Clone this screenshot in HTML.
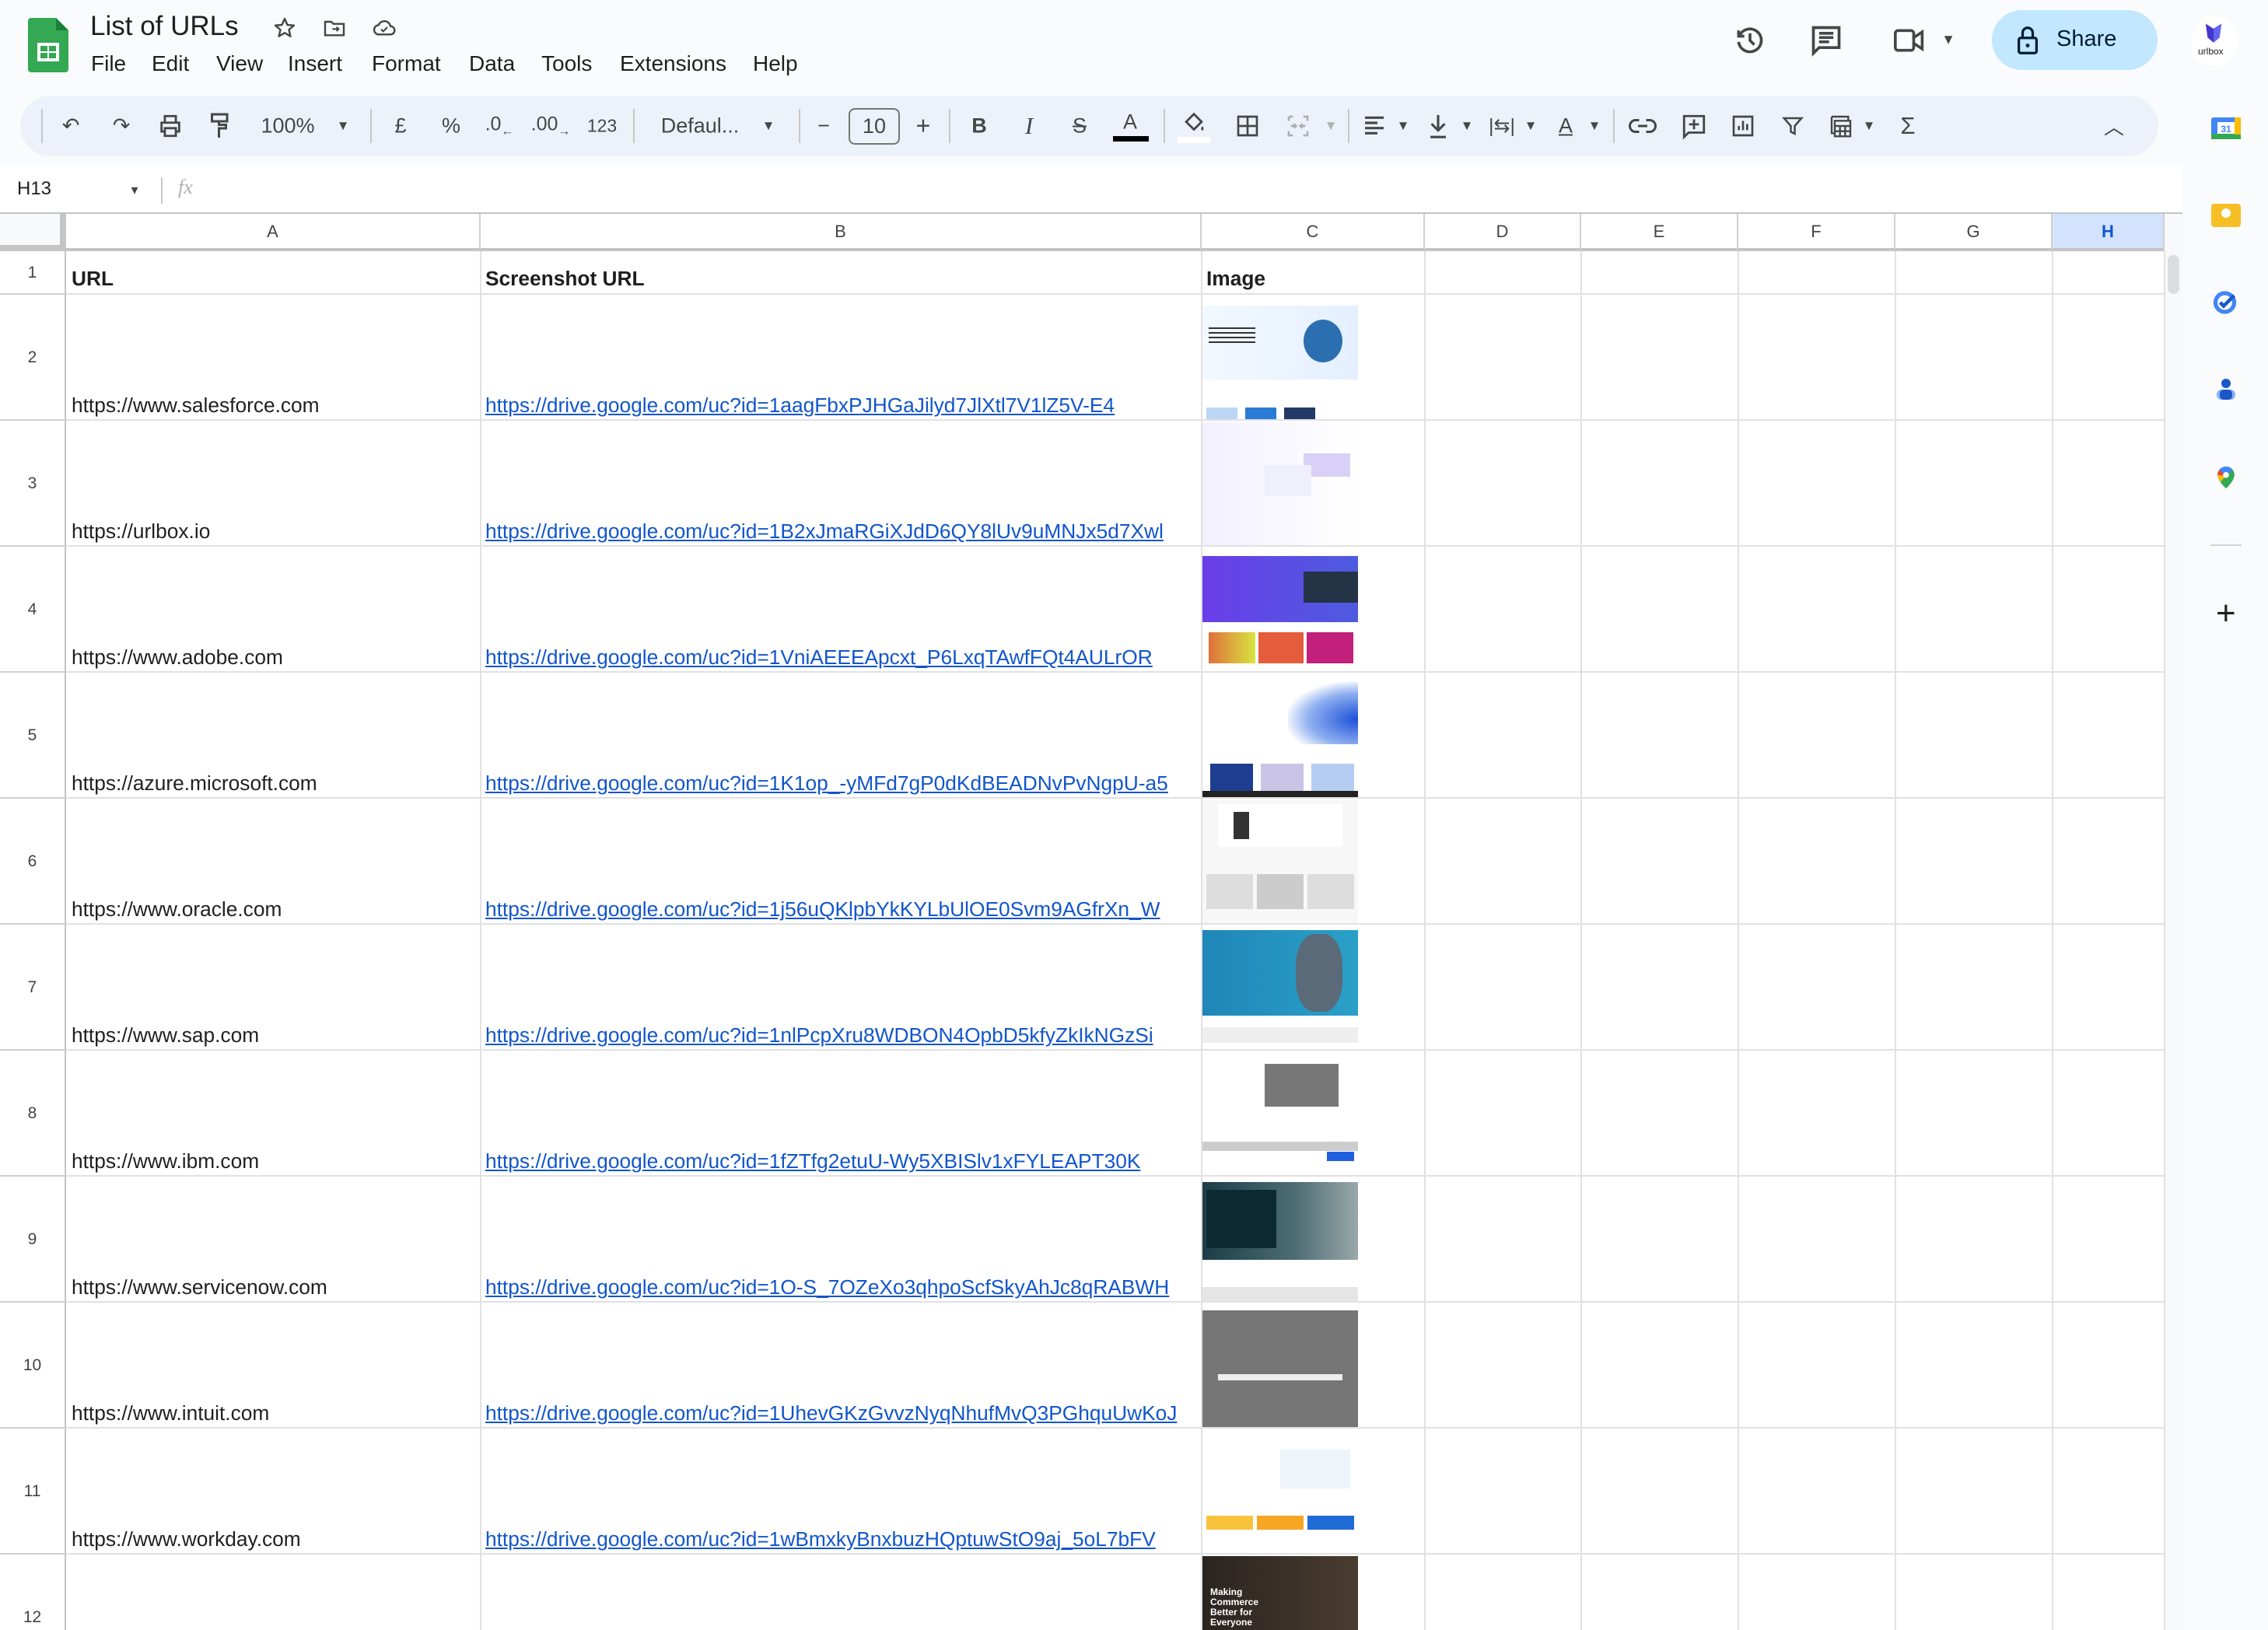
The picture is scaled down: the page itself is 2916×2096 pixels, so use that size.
<!DOCTYPE html>
<html style="overflow:hidden;height:2096px"><head><meta charset="utf-8"><style>
*{box-sizing:border-box;margin:0;padding:0}
body{width:2916px;height:2096px;overflow:hidden;background:#f9fbfd;font-family:"Liberation Sans",Arial,sans-serif;position:relative;color:#1f1f1f}
.a{position:absolute}
.menu span{position:absolute;top:66px;font-size:28px;color:#1f1f1f}
.tb{position:absolute;left:26px;top:123px;width:2749px;height:78px;background:#edf2fa;border-radius:39px}
.ti{position:absolute;top:162px;transform:translate(-50%,-50%);color:#444746;font-size:27px;white-space:nowrap}
.sep{position:absolute;top:140px;width:2px;height:44px;background:#c7c7c7}
.ch{position:absolute;top:275px;height:48px;border-right:2px solid #d0d0d0;border-bottom:4px solid #c4c4c4;background:#fff;text-align:center;font-size:22px;line-height:46px;color:#444}
.rh{position:absolute;left:0;width:85px;border-bottom:2px solid #d0d0d0;border-right:2px solid #c4c4c4;background:#fff;font-size:21px;color:#444;text-align:center}
.vl{position:absolute;top:323px;width:2px;height:1773px;background:#e1e1e1}
.hl{position:absolute;left:85px;width:2698px;height:2px;background:#e1e1e1}
.c{position:absolute;font-size:26.3px;white-space:nowrap}
.lk{color:#1155cc;text-decoration:underline}
.th{position:absolute;left:1546px;width:200px;height:158px;overflow:hidden;background:#fff}
svg{display:block}
</style></head><body>

<svg class="a" style="left:36px;top:23px" width="52" height="70" viewBox="0 0 52 70"><path d="M4 0h32l16 16v50a4 4 0 0 1-4 4H4a4 4 0 0 1-4-4V4a4 4 0 0 1 4-4z" fill="#34a853"/><path d="M36 0v16h16z" fill="#188038"/><rect x="12" y="32" width="28" height="24" fill="#fff"/><rect x="16" y="36" width="9" height="7" fill="#34a853"/><rect x="27" y="36" width="9" height="7" fill="#34a853"/><rect x="16" y="45" width="9" height="7" fill="#34a853"/><rect x="27" y="45" width="9" height="7" fill="#34a853"/></svg>
<div class="a" style="left:116px;top:14px;font-size:35px;color:#1f1f1f">List of URLs</div>
<svg class="a" style="left:350px;top:20px" width="32" height="32" viewBox="0 0 24 24"><path d="M12 3l2.6 6 6.4.5-4.9 4.2 1.5 6.3L12 16.7 6.4 20l1.5-6.3L3 9.5 9.4 9z" fill="none" stroke="#444746" stroke-width="1.8" stroke-linejoin="round"/></svg>
<svg class="a" style="left:414px;top:20px" width="32" height="32" viewBox="0 0 24 24"><path d="M3 6h6l2 2h10v11H3z" fill="none" stroke="#444746" stroke-width="1.8"/><path d="M10 13h6m-2-2l2 2-2 2" fill="none" stroke="#444746" stroke-width="1.6"/></svg>
<svg class="a" style="left:477px;top:19px" width="34" height="32" viewBox="0 0 24 24"><path d="M7 19h11a4 4 0 0 0 0-8 6 6 0 0 0-11.5-1A4.5 4.5 0 0 0 7 19z" fill="none" stroke="#444746" stroke-width="1.8"/><path d="M9 14l2 2 4-4" fill="none" stroke="#444746" stroke-width="1.6"/></svg>
<div class="menu"><span style="left:117px">File</span><span style="left:195px">Edit</span><span style="left:278px">View</span><span style="left:370px">Insert</span><span style="left:478px">Format</span><span style="left:603px">Data</span><span style="left:696px">Tools</span><span style="left:797px">Extensions</span><span style="left:968px">Help</span></div>

<svg class="a" style="left:2228px;top:30px" width="44" height="44" viewBox="0 0 24 24"><path d="M4 5v4h4" fill="none" stroke="#444746" stroke-width="2"/><path d="M4.5 9A8 8 0 1 1 4 13" fill="none" stroke="#444746" stroke-width="2"/><path d="M12 7v5l3 3" fill="none" stroke="#444746" stroke-width="2"/></svg>
<svg class="a" style="left:2326px;top:30px" width="44" height="44" viewBox="0 0 24 24"><path d="M3 3h18v14H7l-4 4z" fill="none" stroke="#444746" stroke-width="2"/><path d="M7 7h10M7 10h10M7 13h7" stroke="#444746" stroke-width="2"/></svg>
<svg class="a" style="left:2433px;top:32px" width="44" height="40" viewBox="0 0 24 22"><rect x="2" y="4" width="13" height="14" rx="2" fill="none" stroke="#444746" stroke-width="2"/><path d="M15 9l6-4v12l-6-4" fill="none" stroke="#444746" stroke-width="2"/></svg>
<div class="ti" style="left:2505px;top:51px;font-size:18px">▼</div>
<div class="a" style="left:2561px;top:13px;width:213px;height:77px;border-radius:39px;background:#c2e7ff"></div>
<svg class="a" style="left:2594px;top:34px" width="26" height="36" viewBox="0 0 16 22"><rect x="1" y="9" width="14" height="12" rx="1.5" fill="none" stroke="#001d35" stroke-width="2"/><path d="M4 9V5a4 4 0 0 1 8 0v4" fill="none" stroke="#001d35" stroke-width="2"/><circle cx="8" cy="15" r="1.5" fill="#001d35"/></svg>
<div class="a" style="left:2644px;top:34px;font-size:29px;color:#001d35">Share</div>
<div class="a" style="left:2818px;top:20px;width:58px;height:65px;border-radius:29px;background:#fff"></div>
<svg class="a" style="left:2833px;top:28px" width="26" height="28" viewBox="0 0 20 22"><path d="M2 2l8 5 8-5-2 14-6 5-6-5z" fill="#4338ca"/><path d="M10 7l8-5-2 14-6 5z" fill="#6366f1"/></svg>
<div class="a" style="left:2826px;top:59px;font-size:12px;color:#222">urlbox</div>

<div class="tb"></div>
<div class="sep" style="left:53px"></div><div class="sep" style="left:476px"></div><div class="sep" style="left:814px"></div><div class="sep" style="left:1027px"></div><div class="sep" style="left:1220px"></div><div class="sep" style="left:1496px"></div><div class="sep" style="left:1733px"></div><div class="sep" style="left:2074px"></div>
<div class="ti" style="left:91px">↶</div><div class="ti" style="left:156px">↷</div>
<svg class="ti" style="left:219px" width="34" height="34" viewBox="0 0 24 24"><path d="M7 8V3h10v5M7 17H4V9h16v8h-3M7 14h10v7H7z" fill="none" stroke="#444746" stroke-width="2"/></svg>
<svg class="ti" style="left:283px" width="30" height="36" viewBox="0 0 20 24"><path d="M3 2h13v6H3zM9 8v3h6v3H9v8" fill="none" stroke="#444746" stroke-width="2"/></svg>
<div class="ti" style="left:370px">100%</div><div class="ti" style="left:441px;font-size:17px">▼</div>
<div class="ti" style="left:515px">£</div><div class="ti" style="left:580px">%</div><div class="ti" style="left:642px;font-size:25px">.0<sub style="font-size:16px">←</sub></div><div class="ti" style="left:708px;font-size:25px">.00<sub style="font-size:16px">→</sub></div><div class="ti" style="left:774px;font-size:23px">123</div>
<div class="ti" style="left:900px">Defaul...</div><div class="ti" style="left:988px;font-size:17px">▼</div>
<div class="ti" style="left:1059px">−</div>
<div class="a" style="left:1091px;top:139px;width:66px;height:47px;border:2px solid #747775;border-radius:8px;text-align:center;font-size:27px;line-height:43px;color:#444746">10</div>
<div class="ti" style="left:1187px;font-size:32px">+</div>
<div class="ti" style="left:1259px;font-weight:bold">B</div><div class="ti" style="left:1323px;font-style:italic;font-family:'Liberation Serif',serif;font-size:31px">I</div><div class="ti" style="left:1388px;text-decoration:line-through">S</div>
<div class="ti" style="left:1453px;top:157px">A</div><div class="a" style="left:1431px;top:175px;width:46px;height:7px;background:#000"></div>
<svg class="ti" style="left:1535px;top:158px" width="34" height="34" viewBox="0 0 24 24"><path d="M5 11l7-7 7 7-7 7z" fill="none" stroke="#444746" stroke-width="2"/><path d="M20 15c1 2 1 3 0 4-1 0-2-1-1-3z" fill="#444746"/></svg>
<div class="a" style="left:1514px;top:176px;width:42px;height:8px;background:#fff"></div>
<svg class="ti" style="left:1604px" width="32" height="32" viewBox="0 0 24 24"><path d="M3 3h18v18H3zM12 3v18M3 12h18" fill="none" stroke="#444746" stroke-width="2"/></svg>
<svg class="ti" style="left:1669px" width="32" height="32" viewBox="0 0 24 24"><path d="M3 3h4M17 3h4v4M21 17v4h-4M7 21H3v-4M3 7V3M5 12h5m-2-2l2 2-2 2M19 12h-5m2-2l-2 2 2 2" fill="none" stroke="#b0b0b0" stroke-width="2"/></svg>
<div class="ti" style="left:1711px;font-size:17px;color:#b0b0b0">▼</div>
<svg class="ti" style="left:1767px" width="32" height="32" viewBox="0 0 24 24"><path d="M3 4h18M3 9h12M3 14h18M3 19h12" stroke="#444746" stroke-width="2.4"/></svg><div class="ti" style="left:1804px;font-size:17px">▼</div>
<svg class="ti" style="left:1849px" width="30" height="34" viewBox="0 0 20 24"><path d="M10 2v14M4 10l6 6 6-6M3 22h14" fill="none" stroke="#444746" stroke-width="2.2"/></svg><div class="ti" style="left:1886px;font-size:17px">▼</div>
<div class="ti" style="left:1931px;font-size:25px">|⇆|</div><div class="ti" style="left:1968px;font-size:17px">▼</div>
<div class="ti" style="left:2013px;text-decoration:underline">A</div><div class="ti" style="left:2050px;font-size:17px">▼</div>
<svg class="ti" style="left:2112px" width="36" height="24" viewBox="0 0 24 16"><path d="M9 3H6a5 5 0 0 0 0 10h3M15 3h3a5 5 0 0 1 0 10h-3M8 8h8" fill="none" stroke="#444746" stroke-width="2"/></svg>
<svg class="ti" style="left:2178px" width="34" height="36" viewBox="0 0 24 24"><path d="M3 3h18v15H7l-4 4zM12 6v9M7.5 10.5h9" fill="none" stroke="#444746" stroke-width="2"/></svg>
<svg class="ti" style="left:2241px" width="32" height="32" viewBox="0 0 24 24"><path d="M3 3h18v18H3zM8 16v-4M12 16V7M16 16v-6" fill="none" stroke="#444746" stroke-width="2"/></svg>
<svg class="ti" style="left:2305px" width="30" height="32" viewBox="0 0 24 24"><path d="M3 4h18l-7 8v8l-4-2v-6z" fill="none" stroke="#444746" stroke-width="2"/></svg>
<svg class="ti" style="left:2367px" width="32" height="34" viewBox="0 0 24 24"><path d="M3 3h16v4M3 3v16h4M6 7h15v15H6zM6 12h15M6 17h15M11 12v10M16 12v10" fill="none" stroke="#444746" stroke-width="1.8"/></svg><div class="ti" style="left:2403px;font-size:17px">▼</div>
<div class="ti" style="left:2453px;font-size:31px">Σ</div>
<div class="ti" style="left:2718px;font-size:26px">︿</div>

<div class="a" style="left:0;top:213px;width:2806px;height:62px;background:#fff"></div>
<div class="a" style="left:22px;top:229px;font-size:24px;color:#1f1f1f">H13</div>
<div class="ti" style="left:173px;top:245px;font-size:15px">▼</div>
<div class="a" style="left:207px;top:228px;width:2px;height:34px;background:#c7c7c7"></div>
<div class="a" style="left:229px;top:226px;font-size:26px;color:#b0b0b0;font-style:italic;font-family:'Liberation Serif',serif">fx</div>

<div class="a" style="left:0;top:323px;width:2783px;height:1773px;background:#fff"></div>
<div class="a" style="left:0;top:273px;width:2806px;height:3px;background:#c4c4c4"></div>
<div class="a" style="left:0;top:275px;width:85px;height:48px;background:#f8f9fa;border-right:8px solid #c4c4c4;border-bottom:8px solid #c4c4c4"></div>
<div class="ch" style="left:85px;width:533px">A</div>
<div class="ch" style="left:618px;width:927px">B</div>
<div class="ch" style="left:1545px;width:287px">C</div>
<div class="ch" style="left:1832px;width:201px">D</div>
<div class="ch" style="left:2033px;width:202px">E</div>
<div class="ch" style="left:2235px;width:202px">F</div>
<div class="ch" style="left:2437px;width:202px">G</div>
<div class="ch" style="left:2639px;width:144px;background:#d3e3fd;color:#0b57d0;font-weight:bold">H</div>
<div class="a" style="left:2783px;top:275px;width:23px;height:1821px;background:#f8f9fa"></div>
<div class="a" style="left:2787px;top:328px;width:15px;height:50px;border-radius:8px;background:#dadce0"></div>

<div class="vl" style="left:617px"></div><div class="vl" style="left:1544px"></div><div class="vl" style="left:1831px"></div><div class="vl" style="left:2032px"></div><div class="vl" style="left:2234px"></div><div class="vl" style="left:2436px"></div><div class="vl" style="left:2638px"></div><div class="vl" style="left:2782px"></div>

<div class="rh" style="top:323px;height:56px;line-height:56px">1</div>
<div class="hl" style="top:377px"></div>
<div class="c" style="left:92px;top:343px;font-weight:bold">URL</div>
<div class="c" style="left:624px;top:343px;font-weight:bold">Screenshot URL</div>
<div class="c" style="left:1551px;top:343px;font-weight:bold">Image</div>

<div class="rh" style="top:379px;height:162px;line-height:162px">2</div><div class="hl" style="top:539px"></div>
<div class="rh" style="top:541px;height:162px;line-height:162px">3</div><div class="hl" style="top:701px"></div>
<div class="rh" style="top:703px;height:162px;line-height:162px">4</div><div class="hl" style="top:863px"></div>
<div class="rh" style="top:865px;height:162px;line-height:162px">5</div><div class="hl" style="top:1025px"></div>
<div class="rh" style="top:1027px;height:162px;line-height:162px">6</div><div class="hl" style="top:1187px"></div>
<div class="rh" style="top:1189px;height:162px;line-height:162px">7</div><div class="hl" style="top:1349px"></div>
<div class="rh" style="top:1351px;height:162px;line-height:162px">8</div><div class="hl" style="top:1511px"></div>
<div class="rh" style="top:1513px;height:162px;line-height:162px">9</div><div class="hl" style="top:1673px"></div>
<div class="rh" style="top:1675px;height:162px;line-height:162px">10</div><div class="hl" style="top:1835px"></div>
<div class="rh" style="top:1837px;height:162px;line-height:162px">11</div><div class="hl" style="top:1997px"></div>
<div class="rh" style="top:1999px;height:97px;line-height:162px;border-bottom:none">12</div>

<div class="c" style="left:92px;top:506px">https://www.salesforce.com</div><div class="c lk" style="left:624px;top:506px">https://drive.google.com/uc?id=1aagFbxPJHGaJilyd7JlXtl7V1lZ5V-E4</div>
<div class="c" style="left:92px;top:668px">https://urlbox.io</div><div class="c lk" style="left:624px;top:668px">https://drive.google.com/uc?id=1B2xJmaRGiXJdD6QY8lUv9uMNJx5d7Xwl</div>
<div class="c" style="left:92px;top:830px">https://www.adobe.com</div><div class="c lk" style="left:624px;top:830px">https://drive.google.com/uc?id=1VniAEEEApcxt_P6LxqTAwfFQt4AULrOR</div>
<div class="c" style="left:92px;top:992px">https://azure.microsoft.com</div><div class="c lk" style="left:624px;top:992px">https://drive.google.com/uc?id=1K1op_-yMFd7gP0dKdBEADNvPvNgpU-a5</div>
<div class="c" style="left:92px;top:1154px">https://www.oracle.com</div><div class="c lk" style="left:624px;top:1154px">https://drive.google.com/uc?id=1j56uQKlpbYkKYLbUlOE0Svm9AGfrXn_W</div>
<div class="c" style="left:92px;top:1316px">https://www.sap.com</div><div class="c lk" style="left:624px;top:1316px">https://drive.google.com/uc?id=1nlPcpXru8WDBON4OpbD5kfyZkIkNGzSi</div>
<div class="c" style="left:92px;top:1478px">https://www.ibm.com</div><div class="c lk" style="left:624px;top:1478px">https://drive.google.com/uc?id=1fZTfg2etuU-Wy5XBISlv1xFYLEAPT30K</div>
<div class="c" style="left:92px;top:1640px">https://www.servicenow.com</div><div class="c lk" style="left:624px;top:1640px">https://drive.google.com/uc?id=1O-S_7OZeXo3qhpoScfSkyAhJc8qRABWH</div>
<div class="c" style="left:92px;top:1802px">https://www.intuit.com</div><div class="c lk" style="left:624px;top:1802px">https://drive.google.com/uc?id=1UhevGKzGvvzNyqNhufMvQ3PGhquUwKoJ</div>
<div class="c" style="left:92px;top:1964px">https://www.workday.com</div><div class="c lk" style="left:624px;top:1964px">https://drive.google.com/uc?id=1wBmxkyBnxbuzHQptuwStO9aj_5oL7bFV</div>

<div class="th" style="top:381px"><div class="a" style="left:0;top:12px;width:200px;height:95px;background:linear-gradient(90deg,#f3f8ff,#e4f0ff)"></div><div class="a" style="left:130px;top:30px;width:50px;height:55px;border-radius:50%;background:#2c6fb0"></div><div class="a" style="left:8px;top:40px;width:60px;height:20px;background:repeating-linear-gradient(#333 0 2px,transparent 2px 6px)"></div><div class="a" style="left:5px;top:143px;width:40px;height:15px;background:#bcd6f5"></div><div class="a" style="left:55px;top:143px;width:40px;height:15px;background:#2a7bd5"></div><div class="a" style="left:105px;top:143px;width:40px;height:15px;background:#223a66"></div></div>
<div class="th" style="top:543px;background:linear-gradient(90deg,#f3f0ff,#fff)"><div class="a" style="left:130px;top:40px;width:60px;height:30px;background:#d8d0f7"></div><div class="a" style="left:80px;top:55px;width:60px;height:40px;background:#eef0fb"></div></div>
<div class="th" style="top:705px"><div class="a" style="left:0;top:10px;width:200px;height:85px;background:linear-gradient(90deg,#6a3de8,#4d5be0)"></div><div class="a" style="left:130px;top:30px;width:70px;height:40px;background:#243446"></div><div class="a" style="left:8px;top:108px;width:60px;height:40px;background:linear-gradient(90deg,#e0703a,#d8e540)"></div><div class="a" style="left:72px;top:108px;width:58px;height:40px;background:#e55c3a"></div><div class="a" style="left:134px;top:108px;width:60px;height:40px;background:#c2207a"></div></div>
<div class="th" style="top:867px"><div class="a" style="left:110px;top:10px;width:90px;height:80px;background:radial-gradient(ellipse at 100% 60%,#1b4fd8,#8fb0f0 50%,#fff 75%)"></div><div class="a" style="left:10px;top:115px;width:55px;height:35px;background:#1d3d8f"></div><div class="a" style="left:75px;top:115px;width:55px;height:35px;background:#c9c3e6"></div><div class="a" style="left:140px;top:115px;width:55px;height:35px;background:#b5cdf2"></div><div class="a" style="left:0;top:150px;width:200px;height:8px;background:#222"></div></div>
<div class="th" style="top:1029px;background:#f7f7f7"><div class="a" style="left:20px;top:5px;width:160px;height:55px;background:#fff"></div><div class="a" style="left:40px;top:15px;width:20px;height:35px;background:#333"></div><div class="a" style="left:5px;top:95px;width:60px;height:45px;background:#ddd"></div><div class="a" style="left:70px;top:95px;width:60px;height:45px;background:#ccc"></div><div class="a" style="left:135px;top:95px;width:60px;height:45px;background:#ddd"></div></div>
<div class="th" style="top:1191px"><div class="a" style="left:0;top:5px;width:200px;height:110px;background:linear-gradient(90deg,#1f86b8,#2aa0c8)"></div><div class="a" style="left:120px;top:10px;width:60px;height:100px;border-radius:40%;background:#5b6a78"></div><div class="a" style="left:0;top:130px;width:200px;height:20px;background:#eee"></div></div>
<div class="th" style="top:1353px"><div class="a" style="left:80px;top:15px;width:95px;height:55px;background:#777"></div><div class="a" style="left:0;top:115px;width:200px;height:12px;background:#ccc"></div><div class="a" style="left:160px;top:128px;width:35px;height:12px;background:#1f5fe0"></div></div>
<div class="th" style="top:1515px"><div class="a" style="left:0;top:5px;width:200px;height:100px;background:linear-gradient(90deg,#1c3d48,#4e6d74 60%,#9aa8aa)"></div><div class="a" style="left:5px;top:15px;width:90px;height:75px;background:#0d2a33"></div><div class="a" style="left:0;top:140px;width:200px;height:18px;background:#e5e5e5"></div></div>
<div class="th" style="top:1677px"><div class="a" style="left:0;top:8px;width:200px;height:150px;background:#767676"></div><div class="a" style="left:20px;top:90px;width:160px;height:8px;background:#eee"></div></div>
<div class="th" style="top:1839px"><div class="a" style="left:100px;top:25px;width:90px;height:50px;background:#eef4fa"></div><div class="a" style="left:5px;top:110px;width:60px;height:18px;background:#f9c23c"></div><div class="a" style="left:70px;top:110px;width:60px;height:18px;background:#f6a623"></div><div class="a" style="left:135px;top:110px;width:60px;height:18px;background:#1e6bd6"></div></div>
<div class="th" style="top:2001px;height:95px;background:linear-gradient(90deg,#2a2420,#4a3c30)"><div class="a" style="left:10px;top:40px;color:#fff;font-size:12px;font-weight:bold;line-height:13px">Making<br>Commerce<br>Better for<br>Everyone</div></div>

<svg class="a" style="left:2843px;top:150px" width="38" height="30" viewBox="0 0 38 28"><rect width="38" height="28" rx="3" fill="#4285f4"/><rect x="0" y="21" width="38" height="7" fill="#34a853"/><rect x="30" y="0" width="8" height="22" fill="#fbbc04"/><rect x="8" y="6" width="22" height="15" fill="#fff"/><text x="19" y="19" font-size="12" font-family="Liberation Sans" font-weight="bold" fill="#4285f4" text-anchor="middle">31</text></svg>
<div class="a" style="left:2843px;top:262px;width:38px;height:30px;border-radius:4px;background:#f6bf26"></div><div class="a" style="left:2856px;top:268px;width:12px;height:12px;border-radius:50%;background:#fff"></div>
<svg class="a" style="left:2844px;top:374px" width="36" height="30" viewBox="0 0 24 20"><circle cx="11" cy="10" r="8" fill="none" stroke="#4285f4" stroke-width="3.5"/><path d="M7 10l3 3 9-9" fill="none" stroke="#1a57c8" stroke-width="3"/></svg>
<svg class="a" style="left:2847px;top:486px" width="30" height="28" viewBox="0 0 30 28"><circle cx="15" cy="7" r="6" fill="#1a57c8"/><rect x="3" y="15" width="24" height="13" rx="6" fill="#8ab4f8"/><rect x="7" y="15" width="16" height="13" rx="5" fill="#1a57c8"/></svg>
<svg class="a" style="left:2849px;top:598px" width="26" height="32" viewBox="0 0 24 28"><path d="M12 1a10 10 0 0 0-10 10c0 7 10 16 10 16s10-9 10-16A10 10 0 0 0 12 1z" fill="#34a853"/><path d="M12 1a10 10 0 0 0-8 4l8 7 8-7a10 10 0 0 0-8-4z" fill="#4285f4"/><path d="M4 5a10 10 0 0 0-2 6l10 1z" fill="#ea4335"/><path d="M2 11c0 3 2 6 4 8l6-7z" fill="#fbbc04"/><circle cx="12" cy="11" r="3.5" fill="#fff"/></svg>
<div class="a" style="left:2842px;top:700px;width:40px;height:2px;background:#d3d3d3"></div>
<div class="a" style="left:2849px;top:764px;font-size:44px;color:#1f1f1f;font-weight:300">+</div>
</body></html>
